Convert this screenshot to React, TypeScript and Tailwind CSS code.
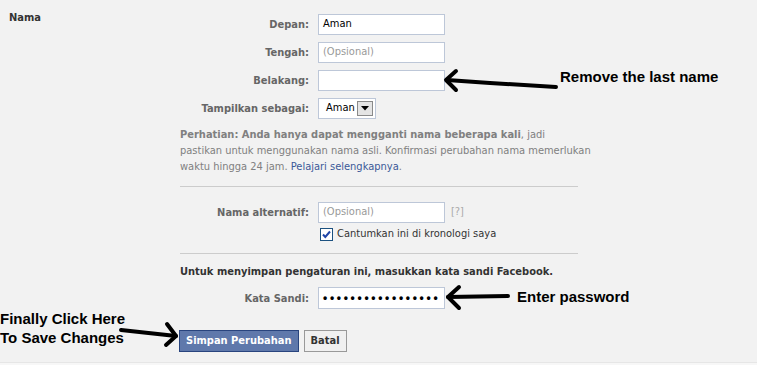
import React from "react";

const font = { fontFamily: '"DejaVu Sans Condensed", Tahoma, "DejaVu Sans", sans-serif' };
const hand = { fontFamily: '"Comic Sans MS", "Liberation Sans", sans-serif' };
const dots = { fontFamily: '"Liberation Sans", Arial, sans-serif' };

function Label({ children }: { children: React.ReactNode }) {
  return <div className="text-right text-[11px] font-bold text-[#666] leading-[13px]">{children}</div>;
}

function Input({ value, placeholder, w = "w-[127px]" }: { value?: string; placeholder?: string; w?: string }) {
  return (
    <div className={`${w} h-[21px] border border-[#bdc7d8] bg-white pl-[4px] flex items-center text-[11px]`}>
      {value ? <span className="text-black">{value}</span> : <span className="text-[#999]">{placeholder}</span>}
    </div>
  );
}

export default function App() {
  return (
    <div className="relative w-[757px] h-[365px] bg-[#f2f2f2] overflow-hidden flex flex-col" style={font}>
      <div className="flex flex-1">
        <div className="w-[180px] pl-[9px] pt-[11px] text-[11px] leading-[13px] font-bold text-[#333]">Nama</div>
        <div className="w-[398px] pt-[14px] flex flex-col">
          <div className="grid grid-cols-[129px_auto] gap-x-[9px] gap-y-[7px] items-center">
            <Label>Depan:</Label>
            <Input value="Aman" />
            <Label>Tengah:</Label>
            <Input placeholder="(Opsional)" />
            <Label>Belakang:</Label>
            <Input />
            <Label>Tampilkan sebagai:</Label>
            <div className="w-[58px] h-[21px] border border-[#bdc7d8] bg-white flex items-center pl-[7px] pr-[2px] justify-between text-[11px] text-black">
              <span>Aman</span>
              <span className="w-[16px] h-[15px] border border-[#8a8a8a] bg-[#e4e4e4] flex items-center justify-center">
                <svg width="8" height="5" viewBox="0 0 8 5"><path d="M0 0h8L4 4.5z" fill="#000" /></svg>
              </span>
            </div>
          </div>
          <p className="mt-[8px] text-[11px] leading-[16px] text-[#808080] whitespace-nowrap">
            <span className="font-bold">Perhatian: Anda hanya dapat mengganti nama beberapa kali</span>, jadi
            <br />
            pastikan untuk menggunakan nama asli. Konfirmasi perubahan nama memerlukan
            <br />
            waktu hingga 24 jam. <span className="text-[#3b5998]">Pelajari selengkapnya</span>.
          </p>
          <div className="mt-[11px] h-px bg-[#cccccc]" />
          <div className="mt-[15px] grid grid-cols-[129px_auto] gap-x-[9px] items-center">
            <Label>Nama alternatif:</Label>
            <div className="flex items-center gap-[5px]">
              <Input placeholder="(Opsional)" />
              <span className="text-[11px] text-[#aaa] ml-[1px]">[?]</span>
            </div>
          </div>
          <div className="mt-[4px] ml-[140px] flex items-center gap-[4px] h-[14px]">
            <span className="w-[13px] h-[13px] border border-[#1c5180] bg-white flex items-center justify-center">
              <svg width="9" height="9" viewBox="0 0 9 9"><path d="M1 4.5l2.3 2.5L8 1.5" stroke="#2146a8" strokeWidth="2" fill="none" /></svg>
            </span>
            <span className="text-[11px] text-[#333]">Cantumkan ini di kronologi saya</span>
          </div>
          <div className="mt-[12px] h-px bg-[#cccccc]" />
          <div className="mt-[11px] text-[11px] leading-[14px] font-bold text-[#333]">
            Untuk menyimpan pengaturan ini, masukkan kata sandi Facebook.
          </div>
          <div className="mt-[8px] grid grid-cols-[129px_auto] gap-x-[9px] items-center">
            <Label>Kata Sandi:</Label>
            <div className="w-[127px] h-[22px] border border-[#bdc7d8] bg-white pl-[4px] flex items-center overflow-hidden">
              <span className="text-[12px] font-bold text-black tracking-[2.7px] leading-none" style={dots}>•••••••••••••••••</span>
            </div>
          </div>
          <div className="mt-[21px] -ml-[1px] flex gap-[5px]">
            <button className="h-[22px] px-[6px] bg-[#5f78ab] border border-[#29447e] text-white text-[11px] font-bold">
              Simpan Perubahan
            </button>
            <button className="h-[22px] px-[6px] bg-[#f0f0f0] border border-[#999] text-[#333] text-[11px] font-bold">
              Batal
            </button>
          </div>
        </div>
      </div>
      <div className="h-[3px] border-t border-[#e6e6e6] bg-[#f7f7f7]" />

      <svg className="absolute inset-0 pointer-events-none" width="757" height="365" viewBox="0 0 757 365">
        <g stroke="#000" strokeWidth="4" strokeLinecap="round" strokeLinejoin="round" fill="none">
          <path d="M556 87 L490 83 L447 80" />
          <path d="M456 71 L446 80 L456 90" />
          <path d="M508 296 L448 297" />
          <path d="M459 287 L448 297 L459 308" />
          <path d="M121 330 L176 336" />
          <path d="M167 324 L176 336 L166 345" />
        </g>
      </svg>
      <div className="absolute left-[560px] top-[69px] text-[15px] leading-[16px] font-bold text-black" style={hand}>Remove the last name</div>
      <div className="absolute left-[517px] top-[289px] text-[15px] leading-[16px] font-bold text-black" style={hand}>Enter password</div>
      <div className="absolute left-0 top-[311px] text-[15px] leading-[16px] font-bold text-black" style={hand}>Finally Click Here</div>
      <div className="absolute left-0 top-[330px] text-[15px] leading-[16px] font-bold text-black" style={hand}>To Save Changes</div>
    </div>
  );
}
